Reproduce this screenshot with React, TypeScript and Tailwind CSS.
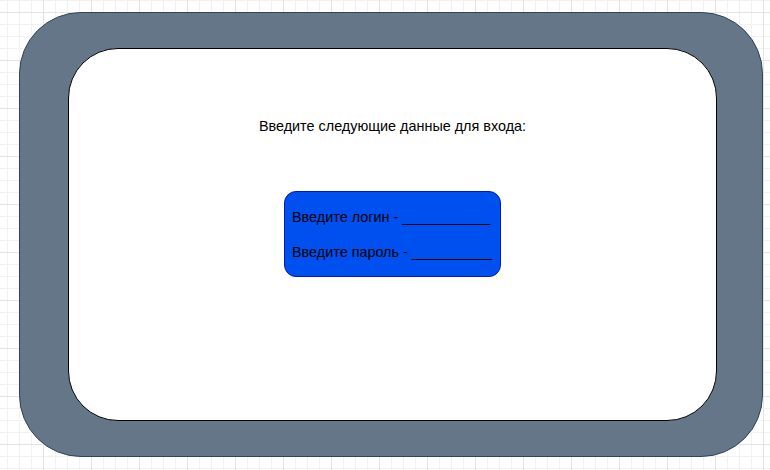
export default function App() {
    return (
        <div className="w-[770px] h-[470px] overflow-hidden bg-white bg-[linear-gradient(to_right,#e4e4e4_1px,transparent_1px),linear-gradient(to_bottom,#e4e4e4_1px,transparent_1px),linear-gradient(to_right,#f2f2f2_1px,transparent_1px),linear-gradient(to_bottom,#f2f2f2_1px,transparent_1px)] bg-[size:48px_48px,48px_48px,12px_12px,12px_12px] bg-[position:43px_12px] pt-[12px] pl-[19px] font-['Liberation_Sans',Arial,sans-serif] text-[14.4px] text-black">
            {/* outer frame */}
            <div className="w-[744px] h-[445px] rounded-[62px] bg-[#647687] border border-[#314354] pt-[35px] pl-[48px]">
                {/* inner panel */}
                <div className="w-[649px] h-[373px] rounded-[50px] bg-white border border-black flex flex-col items-center pt-[69px]">
                    <p className="leading-4">Введите следующие данные для входа:</p>
                    <div className="mt-[57px] w-[217px] h-[86px] rounded-[12px] bg-[#0050ef] border border-[#001dbc] pl-[7px] pt-[17px] flex flex-col gap-[19px]">
                        <p className="leading-4">Введите логин - ___________</p>
                        <p className="leading-4">Введите пароль - __________</p>
                    </div>
                </div>
            </div>
        </div>
    );
}
